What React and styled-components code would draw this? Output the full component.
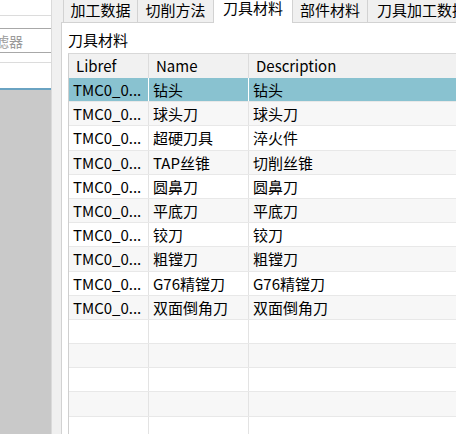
import React from "react";
import styled, { createGlobalStyle } from "styled-components";

const GlobalStyle = createGlobalStyle`
  html, body {
    margin: 0;
    padding: 0;
    overflow: hidden;
    background: #f0f0f0;
  }
  body {
    font-family: "Noto Sans CJK SC", "Noto Sans", sans-serif;
    color: #000;
  }
`;

const tabs = [
  { id: 1, name: "加工数据", width: 75 },
  { id: 2, name: "切削方法", width: 77 },
  { id: 3, name: "刀具材料", width: 80, active: true },
  { id: 4, name: "部件材料", width: 76 },
  { id: 5, name: "刀具加工数据", width: 110 },
];

const tools = [
  { id: 1, libref: "TMC0_0...", name: "钻头", desc: "钻头" },
  { id: 2, libref: "TMC0_0...", name: "球头刀", desc: "球头刀" },
  { id: 3, libref: "TMC0_0...", name: "超硬刀具", desc: "淬火件" },
  { id: 4, libref: "TMC0_0...", name: "TAP丝锥", desc: "切削丝锥" },
  { id: 5, libref: "TMC0_0...", name: "圆鼻刀", desc: "圆鼻刀" },
  { id: 6, libref: "TMC0_0...", name: "平底刀", desc: "平底刀" },
  { id: 7, libref: "TMC0_0...", name: "铰刀", desc: "铰刀" },
  { id: 8, libref: "TMC0_0...", name: "粗镗刀", desc: "粗镗刀" },
  { id: 9, libref: "TMC0_0...", name: "G76精镗刀", desc: "G76精镗刀" },
  { id: 10, libref: "TMC0_0...", name: "双面倒角刀", desc: "双面倒角刀" },
];

const EMPTY_ROWS = 6;

const App = () => {
  const rows = [
    ...tools,
    ...Array.from({ length: EMPTY_ROWS }, (_, i) => ({ id: 100 + i, empty: true })),
  ];

  return (
    <Window>
      <GlobalStyle />

      {/* left side: filter + list */}
      <LeftPanel>
        <TopBand />
        <FilterBox>
          <FilterText>过滤器</FilterText>
        </FilterBox>
        <Band />
        <ListHead />
        <Accent />
        <GrayArea />
      </LeftPanel>

      <Splitter />

      {/* right side: tabs */}
      <RightPanel>
        <TabBar>
          {tabs.map((tab) => (
            <Tab key={tab.id} $width={tab.width} $active={tab.active}>
              <TabLabel $active={tab.active}>{tab.name}</TabLabel>
            </Tab>
          ))}
        </TabBar>

        <TabBody>
          <GroupLabel>刀具材料</GroupLabel>
          <Grid>
            <HeaderRow>
              <HeaderCell>Libref</HeaderCell>
              <HeaderCell>Name</HeaderCell>
              <HeaderCell>Description</HeaderCell>
            </HeaderRow>
            {rows.map((row, i) => (
              <Row key={row.id} $selected={i === 0} $odd={i % 2 === 1}>
                <Cell $selected={i === 0}>{row.libref}</Cell>
                <Cell $selected={i === 0}>{row.name}</Cell>
                <Cell $selected={i === 0}>{row.desc}</Cell>
              </Row>
            ))}
          </Grid>
        </TabBody>
      </RightPanel>
    </Window>
  );
};

export default App;

const Window = styled.div`
  display: flex;
  width: 456px;
  height: 434px;
  overflow: hidden;
  background: #f0f0f0;
`;

const LeftPanel = styled.div`
  width: 51px;
  flex-shrink: 0;
  display: flex;
  flex-direction: column;
  background: #fff;
  overflow: hidden;
`;

const TopBand = styled.div`
  height: 16px;
  box-sizing: border-box;
  border-bottom: 1px solid #dcdcdc;
`;

const FilterBox = styled.div`
  margin-top: 12px;
  height: 25px;
  box-sizing: border-box;
  border-top: 1px solid #a8a8a8;
  border-bottom: 1px solid #a8a8a8;
  display: flex;
  align-items: center;
  white-space: nowrap;
`;

const FilterText = styled.span`
  margin-left: -19px;
  font-size: 14px;
  line-height: 18px;
  color: #9a9a9a;
`;

const Band = styled.div`
  height: 10px;
  box-sizing: border-box;
  border-bottom: 1px solid #dcdcdc;
`;

const ListHead = styled.div`
  height: 25px;
`;

const Accent = styled.div`
  height: 2px;
  background: #6aa3c2;
`;

const GrayArea = styled.div`
  flex: 1;
  background: #c9c9c9;
`;

const Splitter = styled.div`
  width: 10px;
  flex-shrink: 0;
  box-sizing: border-box;
  border-left: 1px solid #dadada;
  background: #f0f0f0;
`;

const RightPanel = styled.div`
  flex: 1;
  min-width: 0;
  display: flex;
  flex-direction: column;
  overflow: hidden;
`;

const TabBar = styled.div`
  height: 22px;
  flex-shrink: 0;
  display: flex;
  align-items: flex-start;
  padding-left: 2px;
  background: #f0f0f0;
  position: relative;
  z-index: 1;
`;

const Tab = styled.div`
  width: ${(p) => p.$width}px;
  flex-shrink: 0;
  box-sizing: border-box;
  height: ${(p) => (p.$active ? 23 : 22)}px;
  margin-right: -1px;
  display: flex;
  justify-content: center;
  border-left: 1px solid #d2d2d2;
  border-right: 1px solid #d2d2d2;
  background: ${(p) => (p.$active ? "#fff" : "#f0f0f0")};
  position: relative;
  z-index: ${(p) => (p.$active ? 2 : 1)};
  white-space: nowrap;
`;

const TabLabel = styled.span`
  font-size: 15px;
  line-height: ${(p) => (p.$active ? 16 : 18)}px;
  padding-top: ${(p) => (p.$active ? 0 : 1)}px;
`;

const TabBody = styled.div`
  flex: 1;
  min-height: 0;
  box-sizing: border-box;
  background: #fff;
  border-left: 1px solid #d2d2d2;
  border-top: 1px solid #d2d2d2;
  padding: 7px 0 0 6px;
  overflow: hidden;
`;

const GroupLabel = styled.div`
  font-size: 15px;
  line-height: 20px;
  height: 20px;
  margin-bottom: 3px;
  white-space: nowrap;
`;

const Grid = styled.div`
  width: 420px;
  border-left: 1px solid #cfcfcf;
  border-top: 1px solid #d8d8d8;
`;

const columns = "80px 100px 1fr";

const HeaderRow = styled.div`
  display: grid;
  grid-template-columns: ${columns};
  height: 24px;
  background: #f1f1f1;
`;

const HeaderCell = styled.div`
  font-size: 15px;
  line-height: 24px;
  padding-left: 7px;
  border-right: 1px solid #dcdcdc;
  white-space: nowrap;
  overflow: hidden;
`;

const Row = styled.div`
  display: grid;
  grid-template-columns: ${columns};
  height: 24.2px;
  box-sizing: border-box;
  border-bottom: 1px solid #e8e8e8;
  background: ${(p) => (p.$selected ? "#89c2d0" : p.$odd ? "#f7f7f7" : "#fff")};
`;

const Cell = styled.div`
  font-size: 15px;
  line-height: 23px;
  padding-left: 4px;
  border-right: 1px solid ${(p) => (p.$selected ? "#fff" : "#e3e3e3")};
  white-space: nowrap;
  overflow: hidden;
`;
